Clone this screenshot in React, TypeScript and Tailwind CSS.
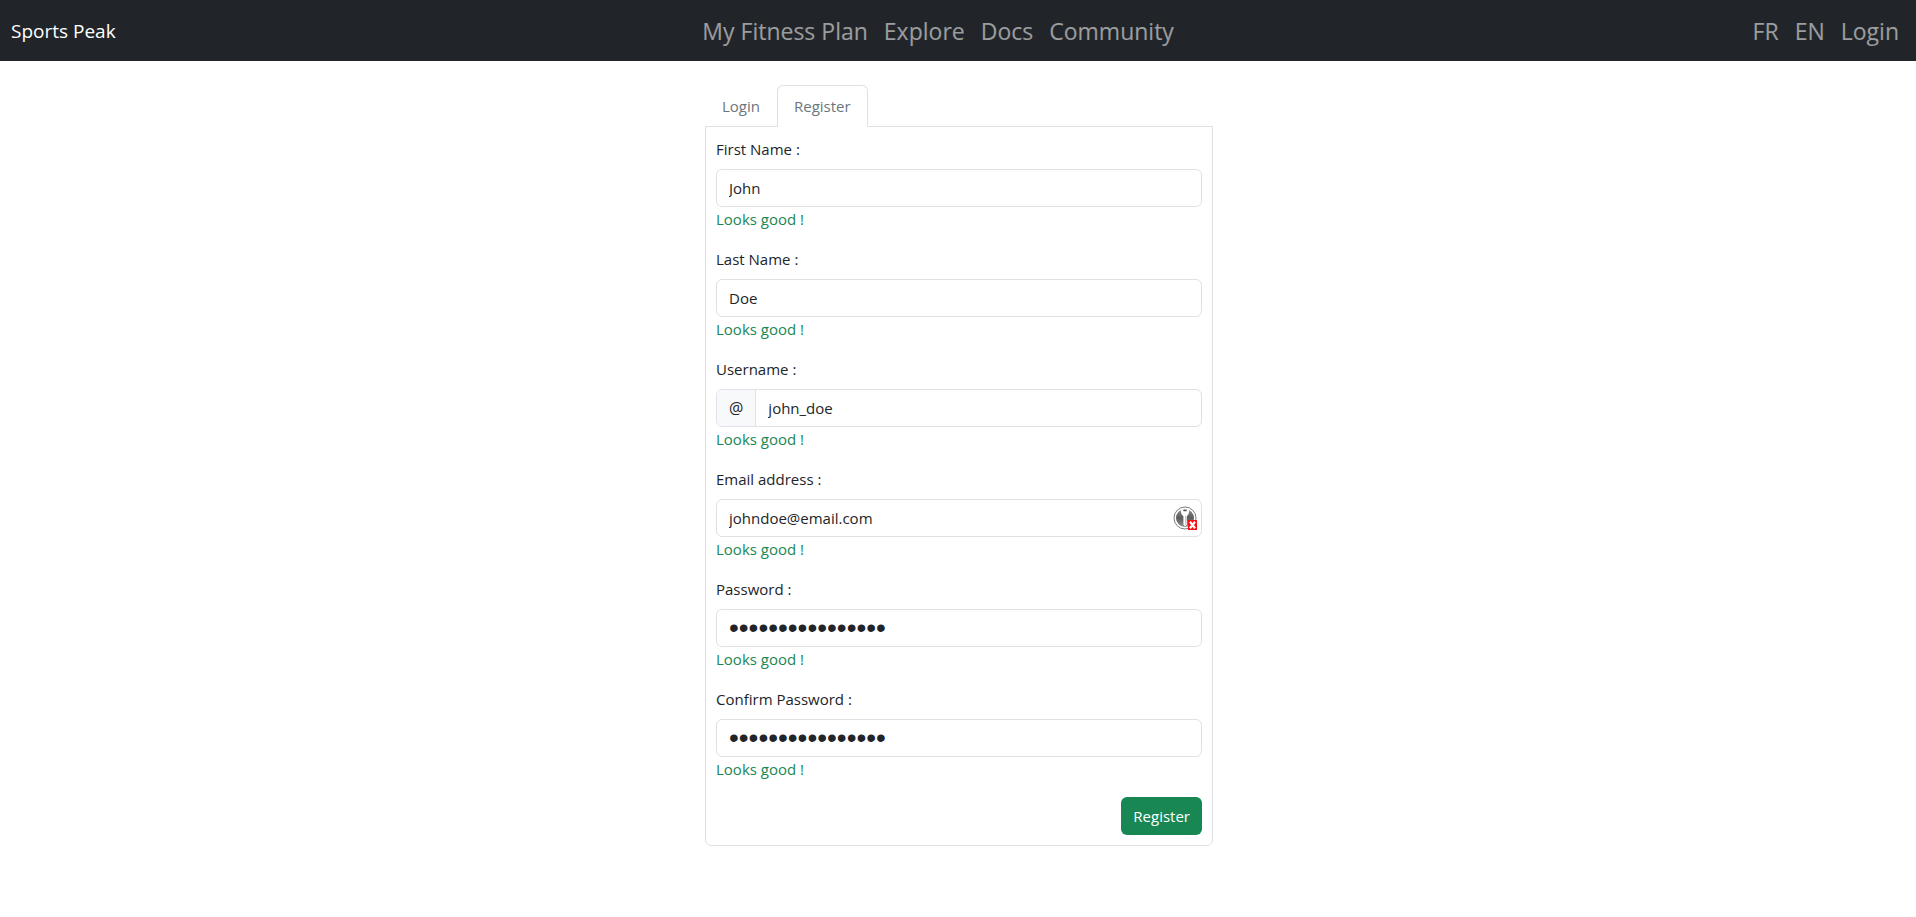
import { useState } from "react";

type Field = {
  id: string;
  label: string;
  type: string;
  value: string;
  prefix?: string;
  badge?: boolean;
};

const fields: Field[] = [
  { id: "firstName", label: "First Name :", type: "text", value: "John" },
  { id: "lastName", label: "Last Name :", type: "text", value: "Doe" },
  { id: "username", label: "Username :", type: "text", value: "john_doe", prefix: "@" },
  { id: "email", label: "Email address :", type: "email", value: "johndoe@email.com", badge: true },
  { id: "password", label: "Password :", type: "password", value: "Str0ngPassw0rd!!" },
  { id: "confirmPassword", label: "Confirm Password :", type: "password", value: "Str0ngPassw0rd!!" },
];

function KeyBadge() {
  return (
    <svg viewBox="0 0 24 24" className="h-6 w-6" aria-hidden="true">
      <defs>
        <linearGradient id="disc" x1="0" y1="0" x2="0" y2="1">
          <stop offset="0" stopColor="#8a8a8a" />
          <stop offset="0.5" stopColor="#5c5c5c" />
          <stop offset="1" stopColor="#909090" />
        </linearGradient>
      </defs>
      <circle cx="12" cy="12" r="11" fill="#fff" stroke="#7d7d7d" strokeWidth="1" />
      <circle cx="12" cy="12" r="9" fill="url(#disc)" />
      <path
        d="M9 2.4h6l1.2 2.6-.6 3-1.8 2.3v8.2L12 20.6l-1.6-2.1v-8.2L8.4 8l-.6-3z"
        fill="#fff"
      />
      <rect x="10.2" y="3.4" width="3.6" height="1.8" rx="0.6" fill="#555" />
      <path d="M12.6 10v8.6" stroke="#b5b5b5" strokeWidth="0.8" />
      <rect x="15" y="14" width="9" height="10" fill="#fb0d14" />
      <path d="M17 15.8l5 6.4M22 15.8l-5 6.4" stroke="#fff" strokeWidth="2.2" />
    </svg>
  );
}

function FormField({ field }: { field: Field }) {
  const [value, setValue] = useState(field.value);
  const isPassword = field.type === "password";
  return (
    <div className="mb-4">
      <label htmlFor={field.id} className="mb-2 block w-fit">
        {field.label}
      </label>
      <div className="relative flex h-[38px] overflow-hidden rounded-md border border-[#dee2e6] bg-white">
        {field.prefix && (
          <span className="flex items-center border-r border-[#dee2e6] bg-[#f8f9fa] px-3 text-base">
            {field.prefix}
          </span>
        )}
        <input
          id={field.id}
          type={field.type}
          value={value}
          onChange={(e) => setValue(e.target.value)}
          className={
            isPassword
              ? "min-w-0 flex-1 px-3 font-['Liberation_Sans',sans-serif] text-[28px] outline-none"
              : "min-w-0 flex-1 px-3 outline-none"
          }
        />
        {field.badge && (
          <span className="absolute top-1.5 right-1">
            <KeyBadge />
          </span>
        )}
      </div>
      <p className="text-[#198754]">Looks good !</p>
    </div>
  );
}

function NavLink({ children }: { children: string }) {
  return (
    <a href="#" className="px-2 py-2 text-white/55 hover:text-white/75">
      {children}
    </a>
  );
}

export default function App() {
  return (
    <div className="min-h-screen bg-white font-['Open_Sans','Noto_Sans',sans-serif] text-[15px] leading-6 text-[#212529]">
      <nav className="flex h-[61px] items-center justify-between bg-[#212529] pr-[9px] pl-[11px] text-[23px] leading-9">
        <a href="#" className="mr-4 py-1 text-[19px] text-white">
          Sports Peak
        </a>
        <div className="flex">
          <NavLink>My Fitness Plan</NavLink>
          <NavLink>Explore</NavLink>
          <NavLink>Docs</NavLink>
          <NavLink>Community</NavLink>
        </div>
        <div className="flex">
          <NavLink>FR</NavLink>
          <NavLink>EN</NavLink>
          <NavLink>Login</NavLink>
        </div>
      </nav>

      <main className="mx-auto mt-6 w-full max-w-[510px] pl-0.5">
        <div role="tablist" className="relative z-10 -mb-px flex">
          <button
            type="button"
            role="tab"
            aria-selected="false"
            className="rounded-t-md border border-transparent px-4 py-2 text-[#6c757d]"
          >
            Login
          </button>
          <button
            type="button"
            role="tab"
            aria-selected="true"
            className="rounded-t-md border border-[#dee2e6] border-b-white bg-white px-4 py-2 text-[#6c757d]"
          >
            Register
          </button>
        </div>
        <form
          onSubmit={(e) => e.preventDefault()}
          className="rounded-b-md border border-[#dee2e6] p-2.5"
        >
          {fields.map((field) => (
            <FormField key={field.id} field={field} />
          ))}
          <div className="flex justify-end">
            <button type="submit" className="h-[38px] rounded-md bg-[#198754] px-3 text-white">
              Register
            </button>
          </div>
        </form>
      </main>
    </div>
  );
}
